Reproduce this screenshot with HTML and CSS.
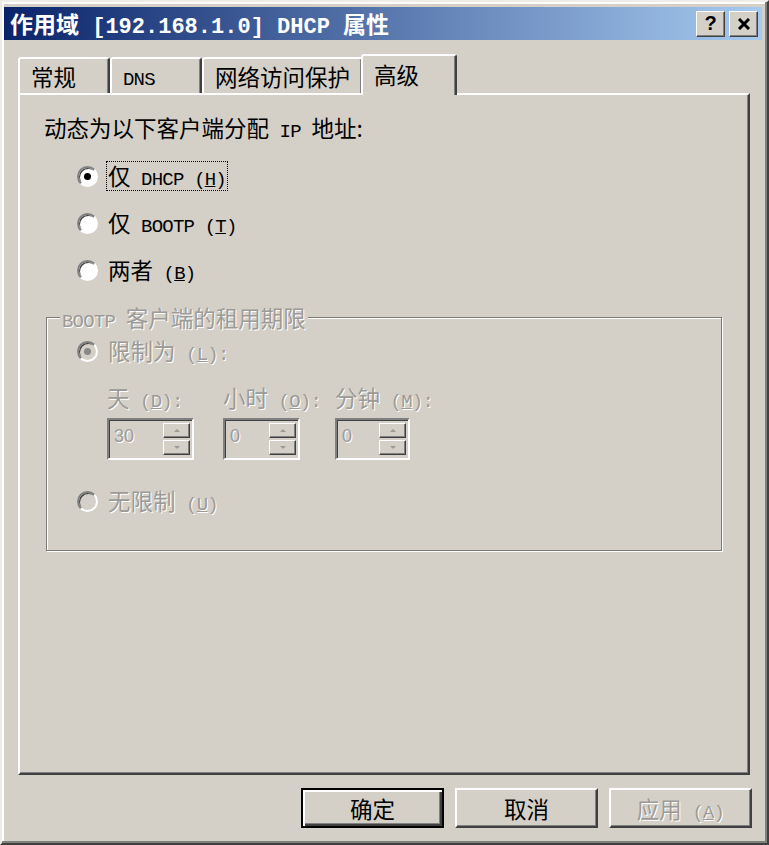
FILE: index.html
```html
<!DOCTYPE html>
<html lang="zh-CN">
<head>
    <meta charset="UTF-8">
    <title>作用域 [192.168.1.0] DHCP 属性</title>
    <link rel="stylesheet" href="styles.css">
</head>
<body>
    <div class="window">
        <div class="titlebar">
            <span class="title">作用域<span class="lat"> [192.168.1.0] DHCP </span>属性</span>
            <div class="caption-btns">
                <span class="cap-btn">?</span>
                <span class="cap-btn">
                    <svg width="14" height="12" viewBox="0 0 14 12"><path d="M2 1 L12 11 M12 1 L2 11" stroke="#000" stroke-width="3" fill="none"/></svg>
                </span>
            </div>
        </div>

        <div class="tabs">
            <div class="tab">常规</div>
            <div class="tab"><span class="lat">DNS</span></div>
            <div class="tab">网络访问保护</div>
            <div class="tab active">高级</div>
        </div>

        <div class="panel">
            <p class="intro">动态为以下客户端分配<span class="lat"> IP </span>地址:</p>

            <div class="options">
                <div class="opt"><span class="radio checked"></span><span class="text focus">仅<span class="lat"> DHCP (<u>H</u>)</span></span></div>
                <div class="opt"><span class="radio"></span><span class="text">仅<span class="lat"> BOOTP (<u>T</u>)</span></span></div>
                <div class="opt"><span class="radio"></span><span class="text">两者<span class="lat"> (<u>B</u>)</span></span></div>
            </div>

            <div class="group disabled">
                <div class="group-title"><span class="lat">BOOTP </span>客户端的租用期限</div>
                <div class="opt"><span class="radio checked"></span><span class="text">限制为<span class="lat"> (<u>L</u>):</span></span></div>
                <div class="spins">
                    <span>天<span class="lat"> (<u>D</u>):</span></span>
                    <span>小时<span class="lat"> (<u>O</u>):</span></span>
                    <span>分钟<span class="lat"> (<u>M</u>):</span></span>
                    <div class="spin spin-day"><span class="val">30</span><span class="spin-btns"><i class="up"></i><i class="down"></i></span></div>
                    <div class="spin spin-hour"><span class="val">0</span><span class="spin-btns"><i class="up"></i><i class="down"></i></span></div>
                    <div class="spin spin-min"><span class="val">0</span><span class="spin-btns"><i class="up"></i><i class="down"></i></span></div>
                </div>
                <div class="opt last"><span class="radio"></span><span class="text">无限制<span class="lat"> (<u>U</u>)</span></span></div>
            </div>
        </div>

        <div class="actions">
            <button class="btn default">确定</button>
            <button class="btn">取消</button>
            <button class="btn disabled">应用<span class="lat"> (<u>A</u>)</span></button>
        </div>
    </div>
</body>
</html>
```

FILE: styles.css
```css
body {
    margin: 0;
    background: #d4d0c8;
    font-family: "Noto Sans CJK SC", sans-serif;
    font-size: 22.5px;
    color: #000;
}
.lat {
    font-family: "Liberation Mono", monospace;
    font-size: 19px;
    letter-spacing: -0.8px;
    line-height: 1;
    white-space: pre;
}
.window {
    box-sizing: border-box;
    width: 769px;
    height: 845px;
    padding: 5px 5px 0 2px;
    border: 2px solid;
    border-color: #eeece6 #404040 #404040 #eeece6;
    box-shadow: inset -2px -2px #808080, inset 2px 2px #fff;
}
.titlebar {
    display: flex;
    align-items: center;
    justify-content: space-between;
    height: 33px;
    padding: 0 4px 0 6px;
    background: linear-gradient(to right, #0a246a, #a6caf0);
}
.title {
    color: #fff;
    font-weight: bold;
    font-size: 23px;
    line-height: 33px;
}
.title .lat {
    font-size: 22px;
    letter-spacing: 0;
}
.caption-btns {
    display: flex;
    gap: 4px;
}
.cap-btn {
    box-sizing: border-box;
    width: 29px;
    height: 26px;
    display: flex;
    align-items: center;
    justify-content: center;
    background: #d4d0c8;
    border: 1px solid;
    border-color: #fff #404040 #404040 #fff;
    box-shadow: inset -1px -1px #808080;
    font: bold 20px "Liberation Sans", sans-serif;
}
.tabs {
    display: flex;
    align-items: flex-end;
    height: 39px;
    margin: 14px 0 0 14px;
    position: relative;
    z-index: 1;
}
.tab {
    box-sizing: border-box;
    min-width: 92px;
    height: 36px;
    padding: 0 11px 0 11px;
    line-height: 34px;
    border: 2px solid;
    border-bottom: 0;
    border-color: #fff #404040 transparent #fff;
    box-shadow: inset -1px 0 #808080;
    border-radius: 3px 3px 0 0;
    background: #d4d0c8;
}
.tab .lat {
    vertical-align: 1px;
}
.tab.active {
    min-width: 96px;
    height: 41px;
    margin: 0 -2px -2px;
    line-height: 37px;
}
.panel {
    box-sizing: border-box;
    width: 732px;
    height: 682px;
    margin-left: 14px;
    padding: 18px 25px 0 24px;
    border: 2px solid;
    border-color: #fff #404040 #404040 #fff;
    box-shadow: inset -1px -1px #808080;
}
.intro {
    margin: 0;
    line-height: 28px;
}
.options {
    display: flex;
    flex-direction: column;
    gap: 17px;
    margin: 19px 0 0 33px;
}
.opt {
    display: flex;
    align-items: center;
    gap: 8px;
    height: 30px;
}
.radio {
    box-sizing: border-box;
    width: 21px;
    height: 21px;
    flex: none;
    display: flex;
    align-items: center;
    justify-content: center;
    border-radius: 50%;
    border: 2px solid;
    border-color: #808080 #fff #fff #808080;
    box-shadow: inset 1px 1px #404040;
    background: #fff;
}
.radio.checked::after {
    content: "";
    width: 7px;
    height: 7px;
    border-radius: 50%;
    background: #000;
}
.text {
    padding: 0 1px;
    line-height: 27px;
    border: 1px dotted transparent;
}
.text.focus {
    border-color: #000;
}
.group {
    margin: 32px 1px 0 2px;
    padding: 0 0 34px 30px;
    border: 1px solid #7c7a76;
    box-shadow: 1px 1px #fff, inset 1px 1px #fff;
}
.group-title {
    width: max-content;
    margin: -15px 0 0 -17px;
    padding: 0 2px;
    line-height: 28px;
    background: #d4d0c8;
}
.group .opt {
    margin-top: 4px;
}
.group .opt.last {
    margin-top: 26px;
}
.disabled,
.btn.disabled {
    color: #9c9a96;
    text-shadow: 1px 1px 0 #fff;
}
.disabled .radio {
    background: #d4d0c8;
}
.disabled .radio.checked::after {
    background: #8a8884;
}
.spins {
    display: grid;
    grid-template-columns: 116px 112px auto;
    grid-template-rows: 28px 42px;
    row-gap: 7px;
    margin: 17px 0 0 30px;
    line-height: 28px;
}
.spin {
    box-sizing: border-box;
    height: 42px;
    display: flex;
    justify-content: space-between;
    padding: 3px 2px 3px 5px;
    border: 2px solid;
    border-color: #808080 #fff #fff #808080;
    box-shadow: inset 1px 1px #404040, inset -1px -1px #d4d0c8;
}
.spin-day {
    width: 87px;
}
.spin-hour {
    width: 77px;
}
.spin-min {
    width: 75px;
}
.val {
    font-family: "Liberation Sans", sans-serif;
    font-size: 18px;
    line-height: 26px;
}
.spin-btns {
    display: flex;
    flex-direction: column;
    gap: 2px;
    width: 27px;
}
.spin-btns i {
    flex: 1;
    display: flex;
    align-items: center;
    justify-content: center;
    border: 1px solid;
    border-color: #fff #404040 #404040 #fff;
    box-shadow: inset -1px -1px #808080;
}
.spin-btns .up::after {
    content: "";
    border: 3px solid transparent;
    border-top: 0;
    border-bottom-color: #9c9a96;
}
.spin-btns .down::after {
    content: "";
    border: 3px solid transparent;
    border-bottom: 0;
    border-top-color: #9c9a96;
}
.actions {
    display: flex;
    justify-content: flex-end;
    gap: 11px;
    margin: 13px 10px 0 0;
}
.btn {
    box-sizing: border-box;
    width: 143px;
    height: 40px;
    padding: 0;
    background: #d4d0c8;
    border: 2px solid;
    border-color: #fff #404040 #404040 #fff;
    box-shadow: inset -1px -1px #808080;
    font: inherit;
    line-height: 34px;
    color: #000;
}
.btn.default {
    border-color: #000;
    box-shadow: inset 2px 2px #fff, inset -2px -2px #404040, inset -3px -3px #808080;
}
```
